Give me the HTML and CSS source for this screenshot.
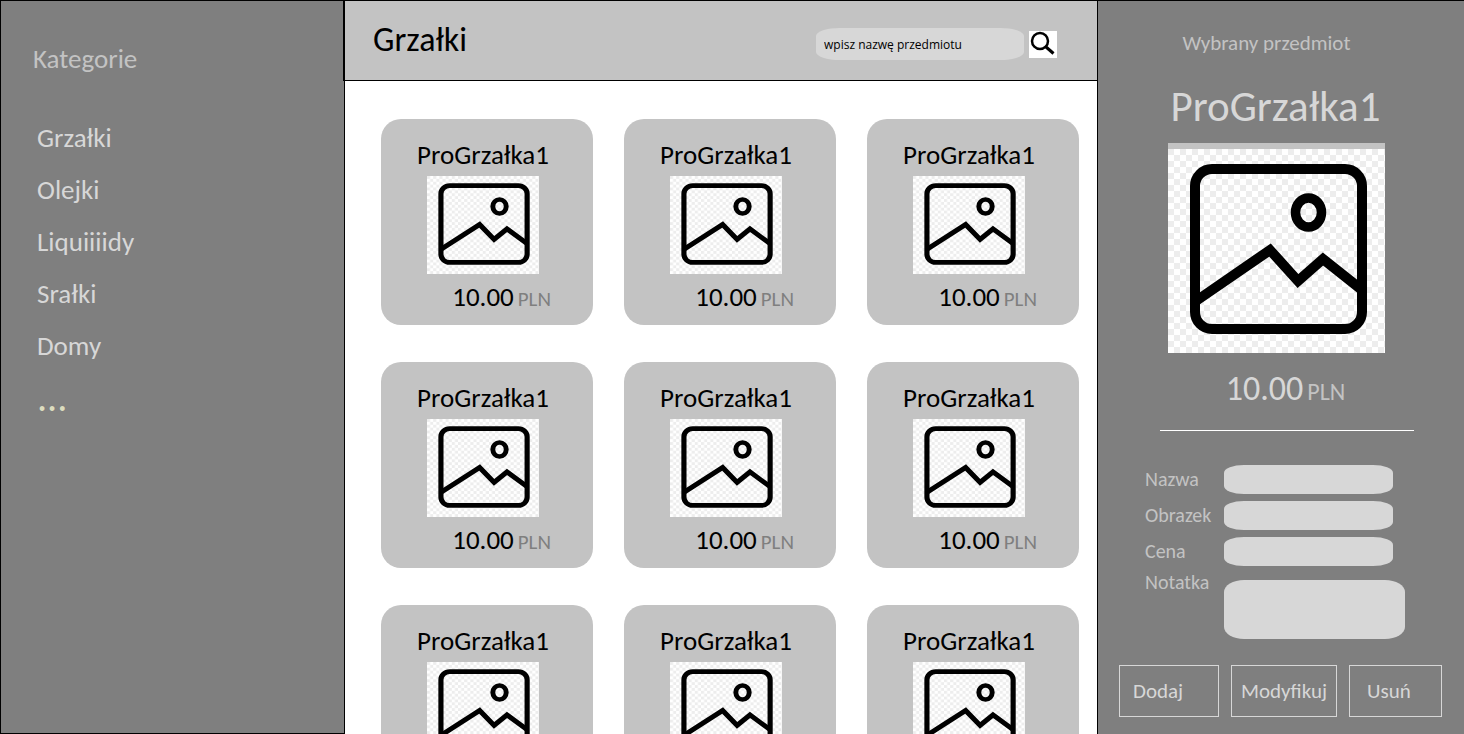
FILE: index.html
```html
<!DOCTYPE html>
<html lang="pl">
<head>
<meta charset="utf-8">
<title>Grzałki</title>
<link rel="stylesheet" href="styles.css">
</head>
<body>
<svg class="defs" aria-hidden="true">
  <defs>
    <pattern id="checker" width="12" height="12" patternUnits="userSpaceOnUse">
      <rect width="12" height="12" fill="#fff"/>
      <path d="M0 0h6v6H0zM6 6h6v6H6z" fill="#ededed"/>
    </pattern>
    <symbol id="picture" viewBox="0 0 217 204" preserveAspectRatio="none">
      <rect width="217" height="204" fill="url(#checker)"/>
      <g fill="none" stroke="#000" stroke-width="10">
        <rect x="27" y="20" width="167" height="160" rx="17" ry="17"/>
        <ellipse cx="140.500" cy="63.500" rx="13" ry="14.500" stroke-width="9.500"/>
        <path d="M28 152 102 101 130 132 155 110 194 141"/>
      </g>
    </symbol>
  </defs>
</svg>
<div class="app">
  <nav class="sidebar" aria-label="Kategorie">
    <h2 class="sidebar-title">Kategorie</h2>
    <ul class="categories">
      <li><a href="#grzalki">Grzałki</a></li>
      <li><a href="#olejki">Olejki</a></li>
      <li><a href="#liquidy">Liquiiiidy</a></li>
      <li><a href="#sralki">Srałki</a></li>
      <li><a href="#domy">Domy</a></li>
      <li><a class="more" href="#wiecej">...</a></li>
    </ul>
  </nav>

  <main class="content">
    <header class="topbar">
      <h1 class="page-title">Grzałki</h1>
      <form class="search">
        <input class="search-input" type="text" placeholder="wpisz nazwę przedmiotu" aria-label="wpisz nazwę przedmiotu">
        <button class="search-button" type="button" aria-label="Szukaj">
          <svg viewBox="0 0 28 27"><g fill="none" stroke="#000" stroke-width="2.500"><circle cx="11" cy="10" r="8"/><path d="M16.500 15.500 24.500 22.500" stroke-width="3"/></g></svg>
        </button>
      </form>
    </header>
    <div class="products">
      <article class="card"><h3 class="card-title">ProGrzałka1</h3><svg class="card-picture"><use href="#picture"/></svg><p class="price card-price">10.00 <span class="currency">PLN</span></p></article>
      <article class="card"><h3 class="card-title">ProGrzałka1</h3><svg class="card-picture"><use href="#picture"/></svg><p class="price card-price">10.00 <span class="currency">PLN</span></p></article>
      <article class="card"><h3 class="card-title">ProGrzałka1</h3><svg class="card-picture"><use href="#picture"/></svg><p class="price card-price">10.00 <span class="currency">PLN</span></p></article>
      <article class="card"><h3 class="card-title">ProGrzałka1</h3><svg class="card-picture"><use href="#picture"/></svg><p class="price card-price">10.00 <span class="currency">PLN</span></p></article>
      <article class="card"><h3 class="card-title">ProGrzałka1</h3><svg class="card-picture"><use href="#picture"/></svg><p class="price card-price">10.00 <span class="currency">PLN</span></p></article>
      <article class="card"><h3 class="card-title">ProGrzałka1</h3><svg class="card-picture"><use href="#picture"/></svg><p class="price card-price">10.00 <span class="currency">PLN</span></p></article>
      <article class="card"><h3 class="card-title">ProGrzałka1</h3><svg class="card-picture"><use href="#picture"/></svg><p class="price card-price">10.00 <span class="currency">PLN</span></p></article>
      <article class="card"><h3 class="card-title">ProGrzałka1</h3><svg class="card-picture"><use href="#picture"/></svg><p class="price card-price">10.00 <span class="currency">PLN</span></p></article>
      <article class="card"><h3 class="card-title">ProGrzałka1</h3><svg class="card-picture"><use href="#picture"/></svg><p class="price card-price">10.00 <span class="currency">PLN</span></p></article>
    </div>
  </main>

  <aside class="details">
    <section class="selected">
      <p class="details-label">Wybrany przedmiot</p>
      <h2 class="details-title">ProGrzałka1</h2>
      <svg class="details-picture"><use href="#picture"/></svg>
      <p class="price details-price">10.00 <span class="currency">PLN</span></p>
    </section>
    <hr class="divider">
    <form class="editor">
      <label for="name">Nazwa</label><input class="field" id="name" type="text">
      <label for="image">Obrazek</label><input class="field" id="image" type="text">
      <label for="price">Cena</label><input class="field" id="price" type="text">
      <label class="note-label" for="note">Notatka</label><textarea class="field note" id="note"></textarea>
    </form>
    <div class="actions">
      <button class="action" type="button">Dodaj</button>
      <button class="action wide" type="button">Modyfikuj</button>
      <button class="action last" type="button">Usuń</button>
    </div>
  </aside>
</div>
</body>
</html>
```
FILE: styles.css
```css
* { box-sizing: border-box; }

body, h1, h2, h3, p, ul { margin: 0; padding: 0; font-weight: 400; }

body, input, textarea, button { font-family: Calibri, Carlito, Lato, sans-serif; }

.defs { position: absolute; width: 0; height: 0; }

.app {
  display: grid;
  grid-template-columns: 344px minmax(0, 1fr) 367px;
  height: 100vh;
  overflow: hidden;
}

.sidebar {
  padding: 42px 32px;
  background: #7f7f7f;
  border: 1px solid #000;
  border-right: 0;
}
.sidebar-title { color: #c3c3c3; font-size: 27px; line-height: 32px; }
.categories { margin-top: 37px; padding-left: 4px; list-style: none; }
.categories li { height: 52px; line-height: 52px; font-size: 27px; }
.categories a { color: #d7d7d7; text-decoration: none; }
.categories .more { color: #dcdcbe; font-size: 40px; }

.content {
  display: flex;
  flex-direction: column;
  min-height: 0;
  background: #fff;
  border-left: 1px solid #000;
}
.topbar {
  display: flex;
  flex: none;
  align-items: flex-start;
  justify-content: space-between;
  height: 81px;
  padding: 19px 40px 0 28px;
  background: #c3c3c3;
  border: solid #000;
  border-width: 1px 0;
  box-shadow: -2px 0 #000;
}
.page-title { font-size: 34px; line-height: 40px; }
.search { display: flex; gap: 5px; align-items: center; margin-top: 8px; }
.search-input {
  width: 208px;
  height: 32px;
  padding: 0 8px;
  border: 0;
  border-radius: 24px / 8px;
  background: #d7d7d7;
  font-family: "Open Sans", "Noto Sans", sans-serif;
  font-size: 12px;
}
.search-input::placeholder { color: #000; opacity: 1; }
.search-button { width: 28px; height: 27px; padding: 0; border: 0; background: #fff; }
.search-button svg { display: block; width: 28px; height: 27px; }

.products {
  display: grid;
  grid-template-columns: repeat(auto-fill, 212px);
  gap: 37px 31px;
  flex: 1;
  min-height: 0;
  overflow: auto;
  scrollbar-width: none;
  padding: 38px 15px 38px 36px;
}
.card {
  display: flex;
  flex-direction: column;
  align-items: center;
  height: 206px;
  padding: 20px 30px 10px 22px;
  border-radius: 20px;
  background: #c3c3c3;
}
.card-title { font-size: 27px; line-height: 32px; }
.card-picture { width: 112px; height: 98px; margin-top: 5px; flex: none; }
.price { display: flex; gap: 4px; align-items: baseline; white-space: nowrap; }
.card-price { align-self: flex-end; margin-top: 7px; padding-right: 12px; font-size: 27px; line-height: 32px; }
.card-price .currency { color: #7f7f7f; font-size: 21px; }

.details {
  display: flex;
  flex-direction: column;
  align-items: center;
  padding: 30px 22px 0 21px;
  background: #7f7f7f;
  border-top: 1px solid #000;
  border-left: 1px solid #000;
  color: #d7d7d7;
}
.selected { display: flex; flex-direction: column; align-items: center; padding-right: 8px; }
.details-label { padding-right: 20px; color: #c3c3c3; font-size: 21px; line-height: 24px; }
.details-title { margin-top: 24px; padding-right: 2px; font-size: 43px; line-height: 56px; }
.details-picture { flex: none; width: 217px; height: 210px; margin-top: 8px; border-top: 6px solid #c3c3c3; }
.details-price { margin-top: 16px; padding-left: 18px; font-size: 34px; line-height: 40px; }
.details-price .currency { color: #c3c3c3; font-size: 24px; }
.divider { width: 254px; margin: 18px 0 0 12px; border: 0; border-top: 1px solid #fff; }
.editor {
  display: grid;
  grid-template-columns: 79px 169px;
  gap: 7px 0;
  align-self: flex-start;
  margin: 34px 0 0 26px;
  color: #c3c3c3;
  font-size: 20px;
  line-height: 29px;
}
.field { width: 169px; height: 29px; border: 0; border-radius: 20px / 8px; background: #d7d7d7; padding: 0 10px; }
.note { width: 181px; height: 59px; margin-top: 7px; border-radius: 20px / 12px; resize: none; }
.editor .note-label { line-height: 18px; }
.actions {
  display: grid;
  grid-template-columns: 100fr 105fr 93fr;
  gap: 12px;
  align-self: stretch;
  margin-top: 26px;
}
.action {
  height: 52px;
  padding: 0 13px;
  border: 1px solid #d7d7d7;
  background: transparent;
  color: #d7d7d7;
  font-size: 21px;
  text-align: left;
}
.action.wide { padding: 0 9px; }
.action.last { padding: 0 17px; }
```
